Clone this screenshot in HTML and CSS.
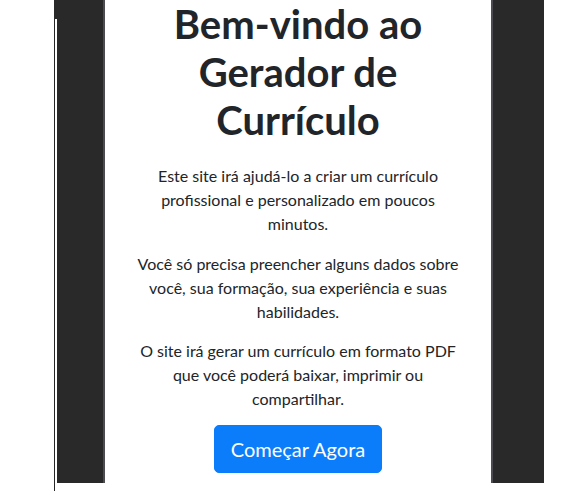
FILE: index.html
```html
<!DOCTYPE html>
<html lang="pt-BR">
<head>
<meta charset="utf-8">
<title>Gerador de Currículo</title>
<link rel="stylesheet" href="styles.css">
</head>
<body>
<div class="stage">
  <div class="left">
    <div class="left-top">
      <div class="dark wide"></div>
      <div class="strip"></div>
    </div>
    <div class="left-body">
      <div class="line"></div>
      <div class="gap"></div>
      <div class="dark narrow tall"></div>
      <div class="strip tall"></div>
    </div>
  </div>
  <main class="main">
    <h1 class="title">Bem-vindo ao Gerador de Currículo</h1>
    <p class="lead">Este site irá ajudá-lo a criar um currículo profissional e personalizado em poucos minutos.</p>
    <p class="lead">Você só precisa preencher alguns dados sobre você, sua formação, sua experiência e suas habilidades.</p>
    <p class="lead last">O site irá gerar um currículo em formato PDF que você poderá baixar, imprimir ou compartilhar.</p>
    <a class="btn" href="#">Começar Agora</a>
  </main>
  <div class="right">
    <div class="strip full"></div>
    <div class="dark rightpanel full"></div>
  </div>
</div>
</body>
</html>
```
FILE: styles.css
```css
html, body {
  margin: 0;
  padding: 0;
  background: #ffffff;
  overflow: hidden;
}
.stage {
  display: flex;
  height: 491px;
  padding-left: 54px;
  font-family: Lato, "Open Sans", sans-serif;
  color: #212529;
}
.left {
  width: 51px;
  display: flex;
  flex-direction: column;
}
.left-top {
  display: flex;
  height: 19px;
}
.left-body {
  flex: 1;
  display: flex;
  align-items: flex-start;
}
.dark { background: #292929; }
.strip { width: 2px; background: #4b4b52; }
.wide { width: 49px; }
.narrow { width: 46px; }
.tall { height: 464px; }
.line { width: 1px; align-self: stretch; background: #262626; }
.gap { width: 2px; }
.right {
  display: flex;
  height: 483px;
}
.rightpanel { width: 51px; }
.full { height: 483px; }
.main {
  width: 386px;
  box-sizing: border-box;
  padding: 0 24px;
  text-align: center;
}
.title {
  font-size: 40px;
  font-weight: 700;
  line-height: 48px;
  margin: 0 0 20px;
}
.lead {
  font-size: 16px;
  line-height: 24px;
  margin: 0 0 15.5px;
}
.lead.last {
  margin-bottom: 14px;
}
.btn {
  display: inline-block;
  background: #0b7dfb;
  color: #ffffff;
  text-decoration: none;
  font-size: 20px;
  line-height: 30px;
  padding: 8px 16px;
  border: 1px solid #0b7dfb;
  border-radius: 5px;
}
```
